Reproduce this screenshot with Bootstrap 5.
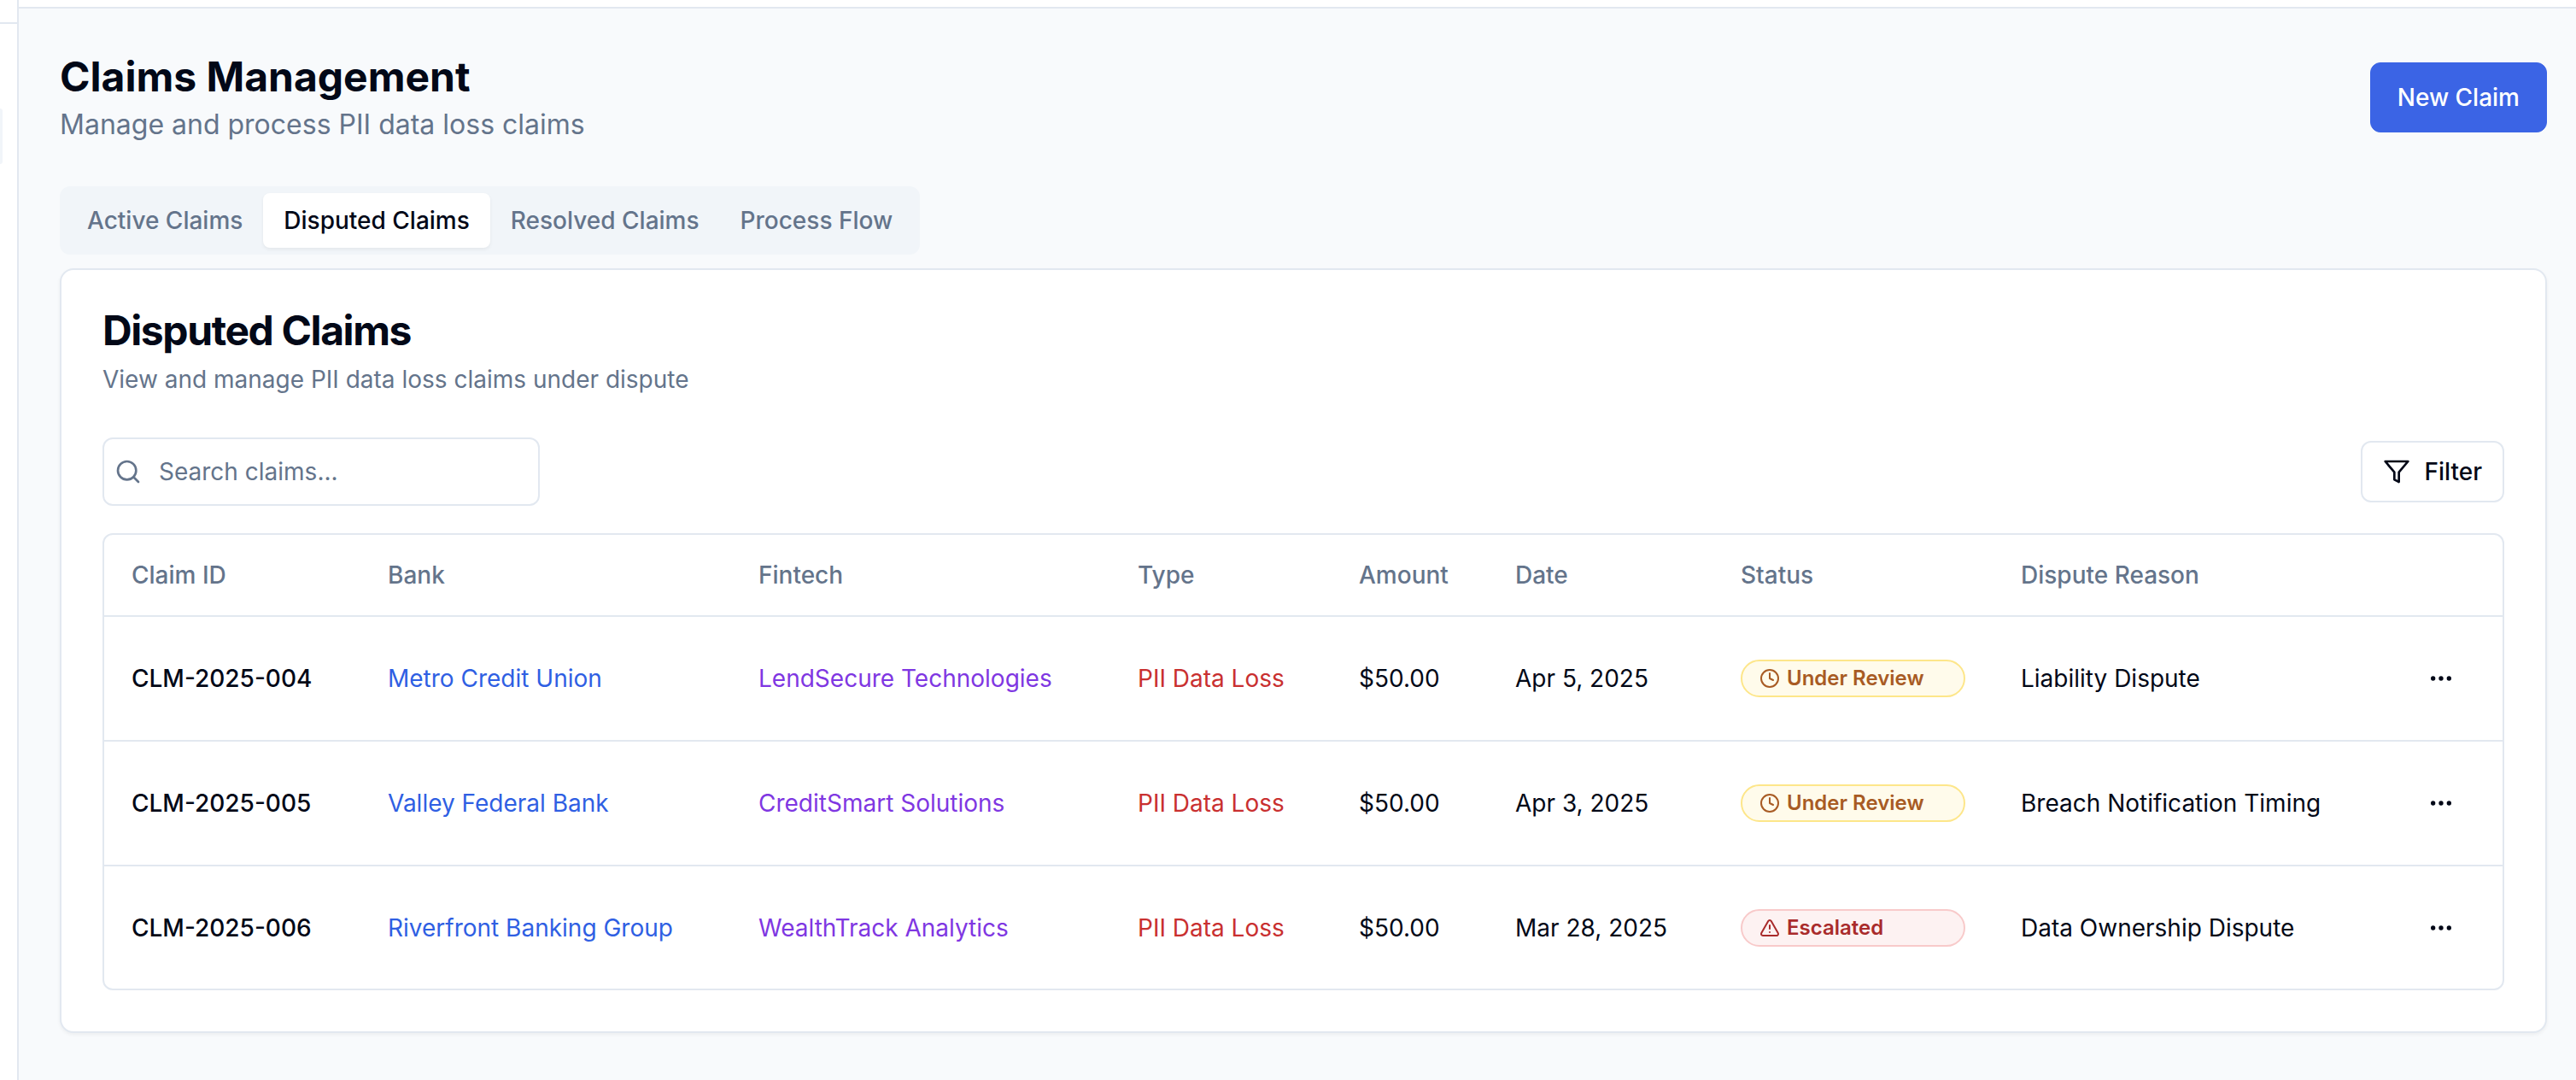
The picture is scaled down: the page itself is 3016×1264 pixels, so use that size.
<!DOCTYPE html>
<html lang="en">
<head>
    <meta charset="UTF-8">
    <title>Claims Management</title>
    <link rel="stylesheet" href="https://cdn.jsdelivr.net/npm/bootstrap@5.3.0/dist/css/bootstrap.min.css">
    <style>
        html, body { height: 100%; }
        body { font-family: "Inter", "Liberation Sans", sans-serif; background: #f8fafc; color: #020817; overflow: hidden; font-size: 28px; }
        .lc { fill: none; stroke: currentColor; stroke-width: 2; stroke-linecap: round; stroke-linejoin: round; flex: none; }

        .side-rail { width: 22px; background: #fff; border-right: 2px solid #e2e8f0; }
        .side-rail-line { height: 2px; background: #e2e8f0; margin-top: 26px; }
        .side-rail-pill { width: 3px; height: 65px; margin-top: 99px; background: #f1f5f9; border-radius: 0 6px 6px 0; }
        .top-strip { height: 10px; background: #fff; border-bottom: 2px solid #e2e8f0; }
        .page-body { padding: 48px 34px 0 48px; }

        .page-title { font-size: 48px; line-height: 64px; font-weight: 700; letter-spacing: 0; margin: 0; }
        .page-sub { font-size: 32px; line-height: 48px; color: #64748b; margin: 0; }
        .btn-new { --bs-btn-bg: #3b64e5; --bs-btn-border-color: #3b64e5; --bs-btn-hover-bg: #3b64e5; --bs-btn-hover-border-color: #3b64e5; font-size: 28px; line-height: 40px; font-weight: 500; padding: 20px 31px; border-radius: 12px; }

        .tab-strip { display: inline-flex; background: #f1f5f9; padding: 8px; border-radius: 12px; margin-top: 48px; margin-bottom: 16px; }
        .tab-strip .nav-link { font-size: 28px; line-height: 40px; font-weight: 500; color: #64748b; padding: 12px 24px; border-radius: 8px; }
        .tab-strip .nav-link.active { background: #fff; color: #020817; box-shadow: 0 2px 4px rgba(0,0,0,.06); }

        .claims-card { border: 2px solid #e2e8f0; border-radius: 16px; box-shadow: 0 2px 4px rgba(0,0,0,.05); --bs-card-bg: #fff; }
        .claims-card .card-body { padding: 48px; }
        .card-head { font-size: 48px; line-height: 46px; font-weight: 700; letter-spacing: -1.4px; margin: 0 0 14px; }
        .card-sub { font-size: 28px; line-height: 40px; color: #64748b; margin: 0 0 48px; }

        .search-box { width: 512px; }
        .search-box svg { position: absolute; left: 14px; top: 24px; color: #64748b; }
        .search-input { height: 80px; font-size: 28px; padding: 0 24px 0 64px; border: 2px solid #e2e8f0; border-radius: 12px; color: #020817; }
        .search-input::placeholder { color: #64748b; opacity: 1; }
        .btn-filter { display: flex; align-items: center; gap: 16px; height: 72px; padding: 0 24px; font-size: 28px; font-weight: 500; color: #020817; background: #fff; border: 2px solid #e2e8f0; border-radius: 12px; }

        .table-wrap { margin-top: 32px; border: 2px solid #e2e8f0; border-radius: 12px; overflow: hidden; }
        .claims-table { table-layout: fixed; margin: 0; font-size: 28px; --bs-table-color: #020817; --bs-table-border-color: #e2e8f0; }
        .claims-table th, .claims-table td { padding: 0 32px; border-bottom: 2px solid #e2e8f0; vertical-align: middle; white-space: nowrap; }
        .claims-table th { height: 95px; font-weight: 500; color: #64748b; }
        .claims-table td { height: 146px; }
        .claims-table tbody tr:last-child td { border-bottom: 0; height: 144px; }
        .col-id { width: 300px; } .col-bank { width: 434px; } .col-fin { width: 444px; } .col-type { width: 259px; }
        .col-amt { width: 183px; } .col-date { width: 264px; } .col-status { width: 328px; } .col-act { width: 120px; }
        .claims-table .cell-act { padding: 0 56px 0 0; }
        .cell-id { font-weight: 500; }
        .claims-table .cell-bank { color: #2f5fe3; }
        .claims-table .cell-fin { color: #7f37e2; }
        .claims-table .cell-type { color: #c93030; }

        .status-tag { display: flex; align-items: center; gap: 8px; width: 263px; height: 44px; padding: 0 20px; font-size: 24px; font-weight: 600; border: 2px solid; border-radius: 22px; }
        .status-review { color: #a85b24; background: #fffbeb; border-color: #fde68a; }
        .status-esc { color: #a92b2b; background: #fdf2f2; border-color: #f8caca; }
        .row-menu { display: block; margin-left: auto; }
    </style>
</head>
<body>
    <div class="d-flex h-100">
        <aside class="side-rail flex-shrink-0">
            <div class="side-rail-line"></div>
            <div class="side-rail-pill"></div>
        </aside>
        <div class="flex-grow-1">
            <div class="top-strip"></div>
            <main class="page-body">
                <div class="d-flex justify-content-between align-items-center">
                    <div>
                        <h1 class="page-title">Claims Management</h1>
                        <p class="page-sub">Manage and process PII data loss claims</p>
                    </div>
                    <button class="btn btn-primary btn-new">New Claim</button>
                </div>

                <!-- Tabs -->
                <div>
                    <ul class="nav tab-strip">
                        <li class="nav-item"><a class="nav-link" href="#">Active Claims</a></li>
                        <li class="nav-item"><a class="nav-link active" href="#">Disputed Claims</a></li>
                        <li class="nav-item"><a class="nav-link" href="#">Resolved Claims</a></li>
                        <li class="nav-item"><a class="nav-link" href="#">Process Flow</a></li>
                    </ul>
                </div>

                <div class="card claims-card">
                    <div class="card-body">
                        <h2 class="card-head">Disputed Claims</h2>
                        <p class="card-sub">View and manage PII data loss claims under dispute</p>

                        <div class="d-flex justify-content-between align-items-center">
                            <div class="search-box position-relative">
                                <svg class="lc" width="32" height="32" viewBox="0 0 24 24"><circle cx="11" cy="11" r="8"/><path d="m21 21-4.3-4.3"/></svg>
                                <input type="text" class="form-control search-input" placeholder="Search claims...">
                            </div>
                            <button class="btn btn-filter">
                                <svg class="lc" width="32" height="32" viewBox="0 0 24 24"><polygon points="22 3 2 3 10 12.46 10 19 14 21 14 12.46 22 3"/></svg>
                                Filter
                            </button>
                        </div>

                        <div class="table-wrap">
                            <table class="table claims-table">
                                <thead>
                                    <tr>
                                        <th class="col-id">Claim ID</th>
                                        <th class="col-bank">Bank</th>
                                        <th class="col-fin">Fintech</th>
                                        <th class="col-type">Type</th>
                                        <th class="col-amt">Amount</th>
                                        <th class="col-date">Date</th>
                                        <th class="col-status">Status</th>
                                        <th>Dispute Reason</th>
                                        <th class="col-act"></th>
                                    </tr>
                                </thead>
                                <tbody>
                                    <tr>
                                        <td class="cell-id">CLM-2025-004</td>
                                        <td class="cell-bank">Metro Credit Union</td>
                                        <td class="cell-fin">LendSecure Technologies</td>
                                        <td class="cell-type">PII Data Loss</td>
                                        <td>$50.00</td>
                                        <td>Apr 5, 2025</td>
                                        <td><span class="status-tag status-review"><svg class="lc" width="24" height="24" viewBox="0 0 24 24"><circle cx="12" cy="12" r="10"/><polyline points="12 6 12 12 16 14"/></svg>Under Review</span></td>
                                        <td>Liability Dispute</td>
                                        <td class="cell-act"><svg class="lc row-menu" width="32" height="32" viewBox="0 0 24 24"><circle cx="12" cy="12" r="1"/><circle cx="19" cy="12" r="1"/><circle cx="5" cy="12" r="1"/></svg></td>
                                    </tr>
                                    <tr>
                                        <td class="cell-id">CLM-2025-005</td>
                                        <td class="cell-bank">Valley Federal Bank</td>
                                        <td class="cell-fin">CreditSmart Solutions</td>
                                        <td class="cell-type">PII Data Loss</td>
                                        <td>$50.00</td>
                                        <td>Apr 3, 2025</td>
                                        <td><span class="status-tag status-review"><svg class="lc" width="24" height="24" viewBox="0 0 24 24"><circle cx="12" cy="12" r="10"/><polyline points="12 6 12 12 16 14"/></svg>Under Review</span></td>
                                        <td>Breach Notification Timing</td>
                                        <td class="cell-act"><svg class="lc row-menu" width="32" height="32" viewBox="0 0 24 24"><circle cx="12" cy="12" r="1"/><circle cx="19" cy="12" r="1"/><circle cx="5" cy="12" r="1"/></svg></td>
                                    </tr>
                                    <tr>
                                        <td class="cell-id">CLM-2025-006</td>
                                        <td class="cell-bank">Riverfront Banking Group</td>
                                        <td class="cell-fin">WealthTrack Analytics</td>
                                        <td class="cell-type">PII Data Loss</td>
                                        <td>$50.00</td>
                                        <td>Mar 28, 2025</td>
                                        <td><span class="status-tag status-esc"><svg class="lc" width="24" height="24" viewBox="0 0 24 24"><path d="m21.73 18-8-14a2 2 0 0 0-3.48 0l-8 14A2 2 0 0 0 4 21h16a2 2 0 0 0 1.73-3Z"/><path d="M12 9v4"/><path d="M12 17h.01"/></svg>Escalated</span></td>
                                        <td>Data Ownership Dispute</td>
                                        <td class="cell-act"><svg class="lc row-menu" width="32" height="32" viewBox="0 0 24 24"><circle cx="12" cy="12" r="1"/><circle cx="19" cy="12" r="1"/><circle cx="5" cy="12" r="1"/></svg></td>
                                    </tr>
                                </tbody>
                            </table>
                        </div>
                    </div>
                </div>
            </main>
        </div>
    </div>
    <script src="https://cdn.jsdelivr.net/npm/bootstrap@5.3.0/dist/js/bootstrap.bundle.min.js"></script>
</body>
</html>
